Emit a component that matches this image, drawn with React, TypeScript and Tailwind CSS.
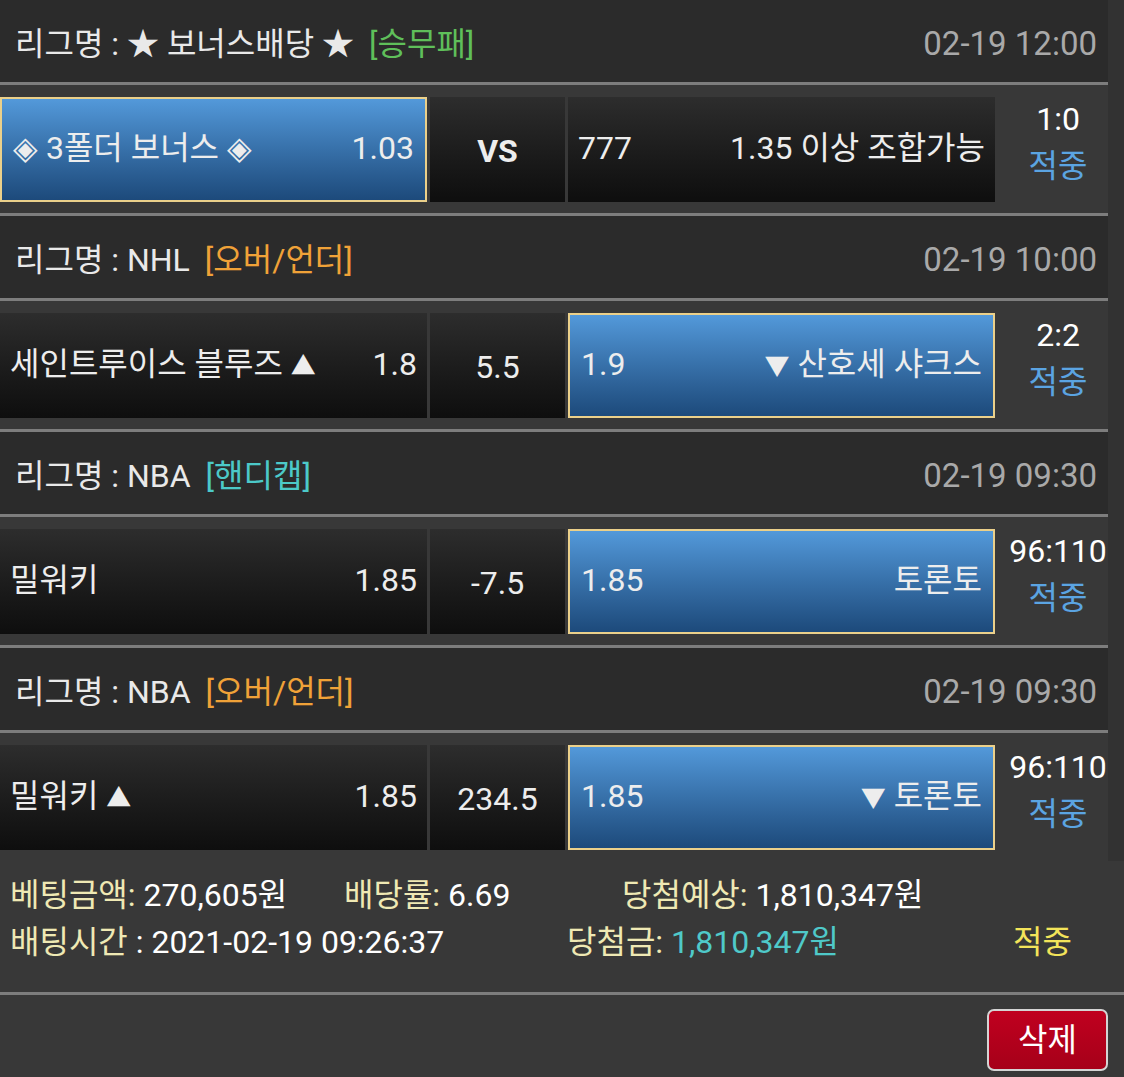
import type { ReactNode } from 'react'

type Game = {
  league: string
  type: string
  typeColor: string
  time: string
  home: string
  homeOdds: string
  mid: string
  midBold?: boolean
  awayOdds: string
  away: string
  pick: 'home' | 'away'
  score: string
}

const games: Game[] = [
  {
    league: '★ 보너스배당 ★',
    type: '[승무패]',
    typeColor: 'text-[#5fbf5a]',
    time: '02-19 12:00',
    home: '◈ 3폴더 보너스 ◈',
    homeOdds: '1.03',
    mid: 'VS',
    midBold: true,
    awayOdds: '777',
    away: '1.35 이상 조합가능',
    pick: 'home',
    score: '1:0',
  },
  {
    league: 'NHL',
    type: '[오버/언더]',
    typeColor: 'text-[#f0a238]',
    time: '02-19 10:00',
    home: '세인트루이스 블루즈 ▲',
    homeOdds: '1.8',
    mid: '5.5',
    awayOdds: '1.9',
    away: '▼ 산호세 샤크스',
    pick: 'away',
    score: '2:2',
  },
  {
    league: 'NBA',
    type: '[핸디캡]',
    typeColor: 'text-[#4cc9c9]',
    time: '02-19 09:30',
    home: '밀워키',
    homeOdds: '1.85',
    mid: '-7.5',
    awayOdds: '1.85',
    away: '토론토',
    pick: 'away',
    score: '96:110',
  },
  {
    league: 'NBA',
    type: '[오버/언더]',
    typeColor: 'text-[#f0a238]',
    time: '02-19 09:30',
    home: '밀워키 ▲',
    homeOdds: '1.85',
    mid: '234.5',
    awayOdds: '1.85',
    away: '▼ 토론토',
    pick: 'away',
    score: '96:110',
  },
]

// shrink the over/under arrows so they sit like the original glyphs
function withArrows(text: string) {
  return text.split(/([▲▼])/).map((part, i) =>
    part === '▲' || part === '▼' ? (
      <span key={i} className="text-[25px]">
        {part}
      </span>
    ) : (
      part
    ),
  )
}

function OddsCell({ selected, left, right }: { selected: boolean; left: ReactNode; right: ReactNode }) {
  if (selected) {
    return (
      <div className="flex w-[427px] items-center justify-between border-2 border-[#ebd08a] bg-linear-to-b from-[#5399da] to-[#1d4a7b] px-[11px] pb-[3px]">
        <span>{left}</span>
        <span>{right}</span>
      </div>
    )
  }
  return (
    <div className="flex w-[427px] items-center justify-between bg-linear-to-b from-[#2d2d2d] to-[#0e0e0e] px-[10px] pb-[3px]">
      <span>{left}</span>
      <span>{right}</span>
    </div>
  )
}

function GameBlock({ game, last }: { game: Game; last: boolean }) {
  return (
    <div>
      <div className="flex h-[82px] items-center justify-between bg-[#2b2b2b] pl-[15px] pr-[11px] pt-[6px]">
        <div className="text-[#e9e9e9]">
          리그명 : {game.league}
          <span className={`ml-[15px] ${game.typeColor}`}>{game.type}</span>
        </div>
        <div className="text-[33px] text-[#a9a9a9]">{game.time}</div>
      </div>
      <div className="h-[3px] bg-[#7d7d7d]" />
      <div className="flex h-[128px] gap-[3px] pb-[11px] pt-[12px]">
        <OddsCell selected={game.pick === 'home'} left={withArrows(game.home)} right={game.homeOdds} />
        <div
          className={`flex w-[135px] items-center justify-center bg-linear-to-b from-[#2d2d2d] to-[#0e0e0e] pt-[2px] ${
            game.midBold ? 'font-bold' : ''
          }`}
        >
          {game.mid}
        </div>
        <OddsCell selected={game.pick === 'away'} left={game.awayOdds} right={withArrows(game.away)} />
        <div className="-mt-[14px] flex flex-1 flex-col items-center justify-center pl-[10px] leading-[47px]">
          <div className="text-white">{game.score}</div>
          <div className="text-[#5ba4e2]">적중</div>
        </div>
      </div>
      {!last && <div className="h-[3px] bg-[#7d7d7d]" />}
    </div>
  )
}

export default function App() {
  return (
    <div className="min-h-[1077px] w-[1124px] bg-[#383838] font-['Roboto','Noto_Sans_CJK_KR',sans-serif] text-[32px] text-[#ededed]">
      <div className="flex">
        <div className="w-[1108px]">
          {games.map((g, i) => (
            <GameBlock key={i} game={g} last={i === games.length - 1} />
          ))}
        </div>
        <div className="flex-1 bg-[#323232]" />
      </div>

      <div className="px-[10px] pb-[26px] pt-[11px] leading-[47px]">
        <div className="flex">
          <div className="w-[334px]">
            <span className="text-[#efe9b4]">베팅금액:</span> <span className="text-white">270,605원</span>
          </div>
          <div className="w-[278px]">
            <span className="text-[#efe9b4]">배당률:</span> <span className="text-white">6.69</span>
          </div>
          <div>
            <span className="text-[#efe9b4]">당첨예상:</span> <span className="text-white">1,810,347원</span>
          </div>
        </div>
        <div className="flex">
          <div className="w-[557px]">
            <span className="text-[#efe9b4]">배팅시간</span> <span className="text-white">: 2021-02-19 09:26:37</span>
          </div>
          <div className="w-[446px]">
            <span className="text-[#efe9b4]">당첨금:</span> <span className="text-[#4fc9c9]">1,810,347원</span>
          </div>
          <div className="text-[#f3e45a]">적중</div>
        </div>
      </div>

      <div className="h-[3px] bg-[#7d7d7d]" />

      <div className="flex justify-end pr-[16px] pt-[14px]">
        <button
          type="button"
          className="flex h-[62px] w-[121px] items-center justify-center rounded-[7px] border-2 border-[#d4d4d4] bg-linear-to-b from-[#c0001f] to-[#a60019] text-[32px] text-white"
        >
          삭제
        </button>
      </div>
    </div>
  )
}
